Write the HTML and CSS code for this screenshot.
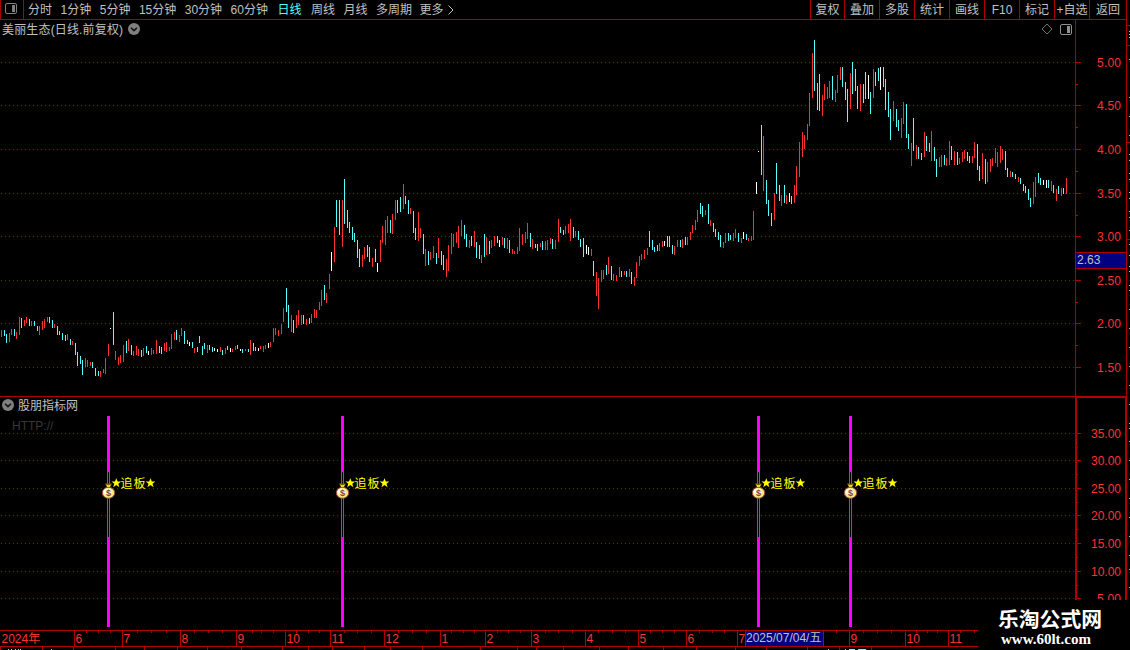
FILE: index.html
```html
<!DOCTYPE html>
<html lang="zh-CN">

<head>
    <meta charset="UTF-8">
    <meta name="viewport" content="width=device-width, initial-scale=1.0">
    <title>美丽生态</title>
    <link rel="stylesheet" href="styles.css">
</head>

<body>
    <div class="main">
        <div class="toolbar">
            <div class="layout-btn">
                <svg width="12" height="12" viewBox="0 0 12 12">
                    <rect x="0.5" y="0.5" width="11" height="10" rx="1.5" fill="none" stroke="#808080" />
                    <rect x="7" y="2" width="3" height="7" fill="#808080" />
                </svg>
            </div>
            <div class="periods">
                <span>分时</span>
                <span>1分钟</span>
                <span>5分钟</span>
                <span>15分钟</span>
                <span>30分钟</span>
                <span>60分钟</span>
                <span class="active">日线</span>
                <span>周线</span>
                <span>月线</span>
                <span>多周期</span>
                <span class="more">更多<svg width="6" height="10" viewBox="0 0 6 10"><path d="M0.5 0.5L5 5L0.5 9.5" fill="none" stroke="#c0c0c0" /></svg></span>
            </div>
            <div class="tools">
                <span>复权</span>
                <span>叠加</span>
                <span>多股</span>
                <span>统计</span>
                <span>画线</span>
                <span>F10</span>
                <span>标记</span>
                <span>+自选</span>
                <span class="back">返回</span>
            </div>
        </div>

        <div class="charts">
            <div class="left">
                <div class="pane price">
                    <svg id="priceChart" width="1126" height="376" viewBox="0 20 1126 376"></svg>
                    <div class="pane-title">
                        <span class="stock-name">美丽生态(日线.前复权)</span>
                        <svg class="drop" width="12" height="12" viewBox="0 0 12 12">
                            <circle cx="6" cy="6" r="6" fill="#808080" />
                            <path d="M3 4.8L6 7.6L9 4.8" fill="none" stroke="#101010" stroke-width="1.5" />
                        </svg>
                    </div>
                    <div class="pane-icons">
                        <svg width="12" height="12" viewBox="0 0 12 12">
                            <path d="M6 1L11 6L6 11L1 6Z" fill="none" stroke="#707070" />
                        </svg>
                        <svg width="12" height="12" viewBox="0 0 12 12">
                            <rect x="0.5" y="1.5" width="11" height="10" rx="1.5" fill="none" stroke="#909090" />
                            <rect x="7" y="3" width="3" height="7" fill="#909090" />
                        </svg>
                    </div>
                    <div class="price-tag">2.63</div>
                </div>

                <div class="pane signal">
                    <svg id="signalChart" width="1126" height="233" viewBox="0 397 1126 233"></svg>
                    <div class="pane-title">
                        <svg class="drop" width="12" height="12" viewBox="0 0 12 12">
                            <circle cx="6" cy="6" r="6" fill="#808080" />
                            <path d="M3 4.8L6 7.6L9 4.8" fill="none" stroke="#101010" stroke-width="1.5" />
                        </svg>
                        <span>股朋指标网</span>
                    </div>
                    <div class="link">HTTP://</div>
                </div>

                <div class="time">
                    <svg id="timeAxis" width="1126" height="20" viewBox="0 630 1126 20"></svg>
                    <div class="date-tag">2025/07/04/五</div>
                </div>
            </div>
            <svg id="strip" width="4" height="650" viewBox="1126 0 4 650"></svg>
        </div>

        <div class="site">
            <p class="site-name">乐淘公式网</p>
            <p class="site-url">www.60lt.com</p>
        </div>
    </div>

    <script src="script.js"></script>
</body>

</html>
```

FILE: styles.css
```css
* {
    padding: 0;
    margin: 0;
    box-sizing: border-box;
}

html,
body {
    width: 100%;
    height: 100%;
    overflow: hidden;
    background-color: #000;
}

body {
    font-family: "Liberation Sans", "Noto Sans CJK SC", sans-serif;
    font-size: 12px;
    color: #c0c0c0;
}

svg {
    display: block;
}

.main {
    position: relative;
    width: 1130px;
    height: 650px;
    overflow: hidden;
}

/* top menu */

.toolbar {
    display: flex;
    height: 20px;
    width: 1127px;
    border-bottom: 1px solid #b00000;
    line-height: 20px;
    white-space: nowrap;
}

.layout-btn {
    width: 24px;
    padding: 3px 0 0 4px;
    border-left: 1px solid #b00000;
    border-right: 1px solid #b00000;
}

.periods {
    display: flex;
    flex: 1;
    gap: 8.5px;
    height: 19px;
    padding-left: 4px;
}

.periods .active {
    margin: 0 1px;
    color: #54ffff;
}

.more {
    display: flex;
    align-items: center;
    gap: 4px;
    margin-left: -1px;
}

.tools {
    display: flex;
    height: 19px;
}

.tools span {
    width: 35px;
    border-left: 1px solid #b00000;
    text-align: center;
}

.tools span:first-child {
    width: 34px;
}

.tools .back {
    width: 38px;
    border-right: 1px solid #b00000;
}

/* panes */

.charts {
    display: flex;
    height: 630px;
}

.left {
    width: 1126px;
}

#strip {
    margin-top: -20px;
}

.pane {
    position: relative;
}

.price {
    height: 377px;
    border-bottom: 1px solid #b00000;
}

.signal {
    height: 233px;
}

.pane-title {
    position: absolute;
    top: 0;
    left: 2px;
    display: flex;
    align-items: center;
    gap: 4px;
    height: 18px;
    line-height: 18px;
}

.signal .pane-title {
    top: -1px;
}

.pane-title span {
    padding-top: 1px;
}

.stock-name {
    padding-right: 1px;
    letter-spacing: 0.16px;
}

.pane-icons {
    position: absolute;
    top: 3px;
    right: 54px;
    display: flex;
    gap: 7px;
}

.price-tag {
    position: absolute;
    top: 232px;
    left: 1075px;
    width: 51px;
    height: 17px;
    padding-left: 1px;
    line-height: 15px;
    background-color: #000080;
    border-top: 1px solid #b00000;
    border-bottom: 1px solid #b00000;
    border-left: 1px solid #b00000;
}

.link {
    position: absolute;
    top: 22px;
    left: 12px;
    line-height: 14px;
    color: #383838;
}

.time {
    position: relative;
    height: 20px;
}

.date-tag {
    position: absolute;
    top: 1px;
    left: 745px;
    width: 79px;
    height: 15px;
    line-height: 14px;
    white-space: nowrap;
    background-color: #000080;
    border-left: 1px solid #b00000;
    border-right: 1px solid #b00000;
}

/* chart text */

.label {
    fill: #ff3232;
    font-size: 12px;
}

.mark {
    fill: #ffff00;
    font-size: 12px;
}

/* site block in the corner */

.site {
    position: absolute;
    right: 0;
    bottom: 0;
    width: 152px;
    height: 50px;
    padding: 6px 0 0 20px;
    background-color: #000;
    color: #fff;
    font-weight: bold;
}

.site-name {
    font-family: "Noto Sans CJK SC", sans-serif;
    font-size: 20.8px;
    line-height: 25px;
}

.site-url {
    padding-left: 3px;
    font-family: "Liberation Serif", serif;
    font-size: 15px;
    line-height: 16px;
}
```

FILE: script.js
```js
const DARK = '#b00000';
const COLORS = { r: '#ff3232', c: '#54ffff', w: '#ffffff' };

// colour, x, top, bottom
const bars = `
r1,330,337 c4,330,336 c6,334,343 r9,333,342 r11,329,335 c14,329,336 r16,332,339 r19,317,335 c21,318,328 r24,320,326
r26,317,323 c29,319,326 r31,321,326 c34,321,326 c37,326,331 r39,326,335 r42,321,330 r44,319,328 r47,317,322 c49,317,323
c52,320,328 r54,324,328 c57,326,335 c59,331,335 c62,333,340 c65,335,341 r67,334,340 c70,339,345 r72,341,345 c75,343,355
c77,352,366 c80,356,364 c82,360,375 r85,358,367 r87,360,367 r90,362,366 c92,362,368 c95,368,376 c98,371,376 r100,371,377
r103,369,373 r105,358,374 r108,344,356 w110,328,329 c113,312,345 r115,351,360 r118,357,365 r120,355,363 r123,345,362
c126,341,353 r128,339,351 c131,345,355 r133,351,356 r136,346,355 r138,349,356 c141,350,357 r143,348,356 c146,346,353
w148,351,355 r151,348,355 r153,350,354 r156,340,354 c159,346,353 c161,347,354 r164,343,351 r166,342,352 r169,347,351
r171,334,349 r174,332,340 c176,330,340 r179,335,342 r181,328,336 c184,331,344 c187,340,344 w189,342,346 c192,342,348
r194,348,353 c197,347,352 c199,336,343 c202,346,355 c204,343,349 r207,345,353 c209,345,350 c212,347,352 w214,348,351
w217,349,352 r220,347,352 c222,350,355 r225,348,354 c227,346,350 w230,348,352 r232,349,352 r235,346,350 c237,345,349
w240,349,351 c242,349,353 r245,349,351 c248,349,352 r250,340,355 c253,343,351 c255,347,351 w258,348,351 r260,346,349
r263,346,352 r265,345,349 w268,343,348 r270,342,347 r273,328,342 r275,328,335 r278,330,336 r281,324,334 r283,308,322
c286,288,312 c288,305,328 r291,315,332 c293,320,333 r296,315,328 r298,310,325 r301,315,325 c303,315,324 r306,319,325
c309,318,324 r311,314,323 r314,309,318 r316,310,318 r319,302,310 r321,290,306 c324,285,300 r326,293,303 r329,274,289
w331,252,271 r334,227,262 c336,200,227 c339,200,235 r342,200,247 c344,179,224 c347,210,228 c349,222,233 c352,227,240
c354,233,242 c357,240,258 c359,249,267 r362,255,267 r364,247,259 c367,245,257 c369,247,262 r372,258,267 c375,249,262
w377,263,272 r380,240,262 r382,226,243 r385,220,245 r387,216,233 c390,220,233 r392,214,234 r395,200,220 c397,200,213
c400,197,212 r403,184,209 c405,196,204 c408,200,214 r410,208,214 c413,211,233 c415,228,240 r418,212,241 r420,228,238
c423,234,254 r425,249,266 c428,251,265 r430,252,260 r433,246,258 c436,253,264 r438,238,258 c441,251,265 c443,255,270
r446,259,277 r448,245,271 r451,233,254 r453,234,247 r456,232,243 r458,226,248 r461,220,236 c464,225,239 c466,234,247
r469,240,248 c471,236,246 r474,231,247 c476,242,258 c479,245,259 r481,255,263 c484,234,257 r486,237,255 c489,241,254
r491,240,248 r494,236,246 c497,236,243 w499,240,247 r502,237,245 c504,238,248 r507,238,249 c509,240,253 r512,249,254
r514,251,254 r517,247,254 r519,228,251 r522,234,245 r525,232,243 r527,223,239 c530,233,247 r532,239,249 c535,244,248
c537,244,251 r540,243,247 c542,241,250 r545,241,250 r547,240,250 r550,238,244 c552,239,249 r555,240,249 r558,219,242
c560,227,233 c563,230,235 r565,226,234 r568,224,233 r570,219,241 c573,227,238 r575,231,237 c578,231,240 c580,239,247
c583,238,257 w586,245,254 w588,247,255 r591,249,256 c593,261,276 r596,272,296 r598,278,309 r601,270,282 r603,270,279
c606,265,275 r608,257,274 c611,266,280 r613,274,281 r616,275,281 r619,267,277 c621,271,277 r624,271,275 c626,271,277
r629,269,277 c631,272,284 r634,277,286 r636,262,278 r639,256,266 r641,254,260 r644,250,259 r647,248,255 c649,231,247
c652,240,250 c654,247,252 c657,245,251 r659,243,251 r662,241,247 w664,241,246 c667,236,247 c669,236,247 c672,245,254
r674,246,255 r677,240,247 c680,240,247 r682,239,248 c685,237,245 r687,237,245 r690,232,240 r692,225,233 r695,220,230
r697,210,222 c700,203,214 c702,206,217 r705,210,215 c708,204,224 r710,220,226 c713,223,232 c715,229,237 c718,232,240
c720,235,247 r723,242,248 r725,233,243 c728,233,241 c730,235,240 r733,233,241 r735,229,238 c738,233,242 r741,238,243
w743,232,239 c746,234,240 r748,238,241 r751,236,241 r753,211,240 w756,182,194 w758,151,152 c761,125,175 r763,136,191
c766,180,204 c768,200,216 c771,213,226 r774,193,220 c776,163,194 c779,185,201 r781,195,206 c784,185,203 r786,195,204
w789,193,202 c791,196,204 r794,185,203 r796,166,195 r799,142,177 r802,132,157 r804,135,149 r807,124,140 r809,93,126
r812,53,98 c814,40,91 c817,83,110 c819,74,111 r822,95,116 r824,84,100 r827,87,99 r829,81,98 c832,76,100 r835,90,102
r837,75,93 r840,67,80 c842,67,87 c845,82,100 c847,89,122 r850,73,109 c852,62,94 c855,69,91 c857,86,109 r860,84,111
c863,84,103 c865,72,99 w868,75,99 c870,92,114 r873,69,98 c875,72,86 c878,68,81 w880,67,90 c883,67,87 c885,79,110
c888,92,117 c890,109,140 r893,101,121 c896,109,127 c898,120,131 r901,118,138 r903,102,124 c906,104,138 c908,134,149
r911,143,166 c913,118,151 r916,145,159 c918,147,159 c921,153,160 r924,132,157 c926,136,151 c929,143,152 r931,131,161
c934,147,161 c936,159,177 r939,157,167 r941,155,167 c944,155,165 r946,158,166 r949,141,165 c951,146,160 r954,151,165
c957,152,165 r959,158,164 r962,152,162 r964,150,159 c967,152,161 c969,156,163 r972,156,163 r974,142,158 c977,144,170
c979,166,181 r982,153,179 c985,159,184 r987,162,182 r990,159,172 r992,158,166 r995,148,163 r997,152,167 r1000,146,163
r1002,149,160 c1005,151,170 c1007,168,177 r1010,171,177 c1012,172,177 c1015,174,179 r1018,177,182 c1020,178,184
c1023,184,191 c1025,186,193 c1028,189,200 c1030,198,207 r1033,182,204 r1035,177,197 c1038,173,183 c1040,178,185
w1043,180,185 w1046,180,188 c1048,180,188 r1051,181,191 c1053,185,193 r1056,189,201 c1058,186,194 r1061,188,196
c1063,188,194 r1066,178,194`;

const priceLevels = [[62, '5.00'], [105, '4.50'], [149, '4.00'], [193, '3.50'], [236, '3.00'], [280, '2.50'], [323, '2.00'], [367, '1.50']];
const signalLevels = [[433, '35.00'], [460, '30.00'], [488, '25.00'], [515, '20.00'], [543, '15.00'], [571, '10.00'], [598, '5.00']];
const signals = [107, 341, 757, 849];

const months = [[0, '2024年'], [74, '6'], [122, '7'], [180, '8'], [236, '9'], [285, '10'], [330, '11'], [384, '12'], [440, '1'], [485, '2'],
    [531, '3'], [585, '4'], [638, '5'], [686, '6'], [737, '7'], [849, '9'], [905, '10'], [948, '11']];
const weeks = [86, 98, 110, 137, 151, 166, 194, 208, 222, 252, 261, 273, 296, 308, 319, 344, 357, 371, 398, 412, 426, 451, 463, 474,
    497, 508, 520, 545, 558, 572, 598, 612, 625, 650, 662, 674, 699, 712, 724, 836, 863, 877, 891, 916, 927, 937, 960, 974];
const tabs = [0, 42, 73, 115, 144, 177, 207, 241, 282, 308, 332, 364, 390, 422, 480, 517, 536, 563, 599, 628, 663, 696, 735, 766, 807, 839, 871];

function rect(x, y, w, h, fill) {
    return `<rect x="${x}" y="${y}" width="${w}" height="${h}" fill="${fill}"/>`;
}

function dots(y) {
    return `<path d="M1 ${y + 0.5}H1075" stroke="#a00000" stroke-dasharray="1 3"/>`;
}

function label(y, text) {
    let w = text.length * 6;
    return `<text class="label" x="${1121 - w}" y="${y + 5}" textLength="${w}">${text}</text>`;
}

function drawPrice() {
    let out = '';
    priceLevels.forEach(([y, text], i) => {
        out += dots(y) + rect(1076, y, 5, 1, DARK) + label(y, text);
        if (i < priceLevels.length - 1) {
            out += rect(1076, y + 22, 2, 1, DARK);
        }
    });
    bars.trim().split(/\s+/).forEach(item => {
        let [x, top, bottom] = item.slice(1).split(',').map(Number);
        out += rect(x, top, 1, bottom - top, COLORS[item[0]]);
    });
    out += rect(1075, 20, 1, 376, DARK);
    document.getElementById('priceChart').innerHTML = out;
}

function bag(cx) {
    return `<g transform="translate(${cx} 483)">
        <path d="M-3.5 0.5H3.5L1.5 4.5H-1.5Z" fill="#806000"/>
        <path d="M-2.5 1.5L0 2.5L2.5 1.5L1 4H-1Z" fill="#ffff00"/>
        <ellipse cx="0" cy="9.8" rx="6.2" ry="5.5" fill="#ffe878" stroke="#8a5048"/>
        <ellipse cx="-1" cy="8.6" rx="3.8" ry="3.2" fill="#ffffe0"/>
        <text x="0" y="13" text-anchor="middle" font-size="9" font-weight="bold" fill="#804038">$</text>
    </g>`;
}

function star(x) {
    return `<path transform="translate(${x} 483)" d="M0 -4.8L1.3 -1.5H4.8L2 0.7L3.1 4.2L0 2.1L-3.1 4.2L-2 0.7L-4.8 -1.5H-1.3Z" fill="#ffff00"/>`;
}

function drawSignals() {
    let out = '';
    signalLevels.forEach(([y, text]) => {
        out += dots(y) + rect(1077, y, 4, 1, DARK) + label(y, text);
        out += rect(1077, y + 14, 1, 1, DARK);
    });
    signals.forEach(x => {
        out += rect(x - 1, 416, 5, 211, '#000') + rect(x, 416, 3, 211, '#ff00ff') + rect(x + 1, 472, 1, 65, '#000');
        out += bag(x + 1.5) + star(x + 9.3) + star(x + 43.5);
        out += `<text class="mark" x="${x + 13.5}" y="487.5" textLength="25">追板</text>`;
    });
    out += rect(1075, 397, 2, 233, DARK) + rect(1125, 397, 1, 233, DARK) + rect(1075, 397, 51, 1, DARK);
    document.getElementById('signalChart').innerHTML = out;
}

function drawTime() {
    let out = rect(0, 630, 978, 1, DARK) + rect(0, 646, 978, 1, DARK);
    months.forEach(([x, text]) => {
        if (x > 0) {
            out += rect(x, 630, 1, 16, DARK);
        }
        out += `<text class="label" x="${x + 1.5}" y="643">${text}</text>`;
    });
    weeks.forEach(x => out += rect(x, 631, 1, 2, DARK));
    tabs.forEach(x => out += rect(x, 647, 1, 3, DARK));
    // tops of the tab captions
    [8, 11, 15, 18, 20, 51, 828, 845].forEach(x => out += rect(x, 649, 1, 1, '#c0c0c0'));
    out += rect(849, 649, 6, 1, '#54ffff') + rect(858, 649, 8, 1, '#54ffff');
    document.getElementById('timeAxis').innerHTML = out;
}

function drawStrip() {
    let out = rect(1126, 0, 1, 600, DARK);
    [25, 45, 142, 239].forEach(y => out += rect(1127, y, 3, 1, DARK));
    [31, 34, 37, 59, 97, 116, 135, 154, 160, 173, 179, 192, 198, 211, 217, 230, 244, 255, 266, 271, 285, 290,
        309, 328, 347, 366, 385, 404, 423, 428, 441, 460, 479, 498, 517, 536, 555, 569, 587].forEach(y => {
        out += rect(1129, y, 1, 1, '#c0c0c0');
    });
    document.getElementById('strip').innerHTML = out;
}

drawPrice();
drawSignals();
drawTime();
drawStrip();
```
